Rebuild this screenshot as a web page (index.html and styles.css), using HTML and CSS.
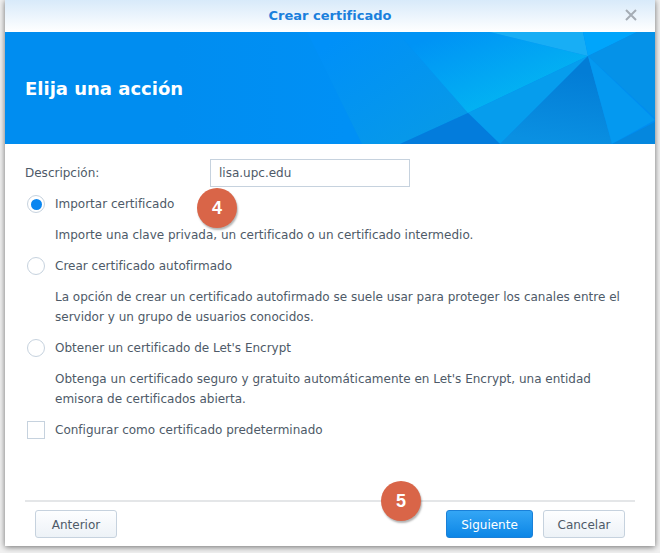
FILE: index.html
```html
<!DOCTYPE html>
<html lang="es">
<head>
<meta charset="utf-8">
<title>Crear certificado</title>
<link rel="stylesheet" href="styles.css">
</head>
<body>
<div class="window">
  <header class="titlebar">
    <span class="title">Crear certificado</span>
    <svg class="close" width="12" height="12" viewBox="0 0 12 12"><path d="M1 1L11 11M11 1L1 11" stroke="#a5acb5" stroke-width="2" fill="none"/></svg>
  </header>
  <section class="banner">
    <svg class="banner-art" width="650" height="112" viewBox="0 0 650 112">
      <defs>
        <linearGradient id="lit" gradientUnits="userSpaceOnUse" x1="440" y1="0" x2="470" y2="80">
          <stop offset="0" stop-color="#0093f5"/>
          <stop offset="1" stop-color="#03b2f2"/>
        </linearGradient>
        <linearGradient id="mid" gradientUnits="userSpaceOnUse" x1="340" y1="0" x2="420" y2="112">
          <stop offset="0" stop-color="#0090f8"/>
          <stop offset="1" stop-color="#0799e8"/>
        </linearGradient>
        <linearGradient id="deep" gradientUnits="userSpaceOnUse" x1="570" y1="40" x2="560" y2="112">
          <stop offset="0" stop-color="#037dd6"/>
          <stop offset="1" stop-color="#0a90e2"/>
        </linearGradient>
        <linearGradient id="left" gradientUnits="userSpaceOnUse" x1="170" y1="0" x2="340" y2="0">
          <stop offset="0" stop-color="#008df0"/>
          <stop offset="1" stop-color="#0090f5"/>
        </linearGradient>
      </defs>
      <rect width="650" height="112" fill="#008df0"/>
      <polygon points="170,0 302,0 357,112 170,112" fill="url(#left)"/>
      <polygon points="302,0 392,0 463,81 395,112 357,112" fill="url(#mid)"/>
      <polygon points="392,0 485,0 583,24 463,81" fill="url(#lit)"/>
      <polygon points="485,0 578,0 583,24" fill="#18aef5"/>
      <polygon points="578,0 632,0 583,24" fill="#00a5fb"/>
      <polygon points="583,24 632,0 650,0 650,86" fill="#0592e8"/>
      <polygon points="463,81 583,24 495,112" fill="#069ded"/>
      <polygon points="463,81 495,112 395,112" fill="#037cdc"/>
      <polygon points="583,24 607,112 495,112" fill="url(#deep)"/>
      <polygon points="583,24 650,88 607,112" fill="#0499f0"/>
      <polygon points="650,90 650,112 607,112" fill="#0587de"/>
    </svg>
    <h1 class="heading">Elija una acción</h1>
  </section>
  <main class="content">
    <div class="field">
      <label class="field-label">Descripción:</label>
      <div class="input">lisa.upc.edu</div>
    </div>
    <div class="option first">
      <span class="radio checked"></span><span>Importar certificado</span>
    </div>
    <p class="hint one">Importe una clave privada, un certificado o un certificado intermedio.</p>
    <div class="option">
      <span class="radio"></span><span>Crear certificado autofirmado</span>
    </div>
    <p class="hint">La opción de crear un certificado autofirmado se suele usar para proteger los canales entre el<br>servidor y un grupo de usuarios conocidos.</p>
    <div class="option">
      <span class="radio"></span><span>Obtener un certificado de Let's Encrypt</span>
    </div>
    <p class="hint">Obtenga un certificado seguro y gratuito automáticamente en Let's Encrypt, una entidad<br>emisora de certificados abierta.</p>
    <div class="option">
      <span class="checkbox"></span><span>Configurar como certificado predeterminado</span>
    </div>
  </main>
  <footer class="footer">
    <button class="btn">Anterior</button>
    <div class="actions">
      <button class="btn primary">Siguiente</button>
      <button class="btn">Cancelar</button>
    </div>
  </footer>
  <span class="badge badge-four">4</span>
  <span class="badge badge-five">5</span>
</div>
</body>
</html>
```
FILE: styles.css
```css
* { box-sizing: border-box; }
html, body { margin: 0; height: 100%; }
body {
  background: #f1f1f1;
  padding: 0 5px 7px 5px;
  font-family: "DejaVu Sans", sans-serif;
  font-size: 12px;
  color: #4e5a68;
  overflow: hidden;
}
.window {
  position: relative;
  height: 546px;
  background: #fff;
  display: flex;
  flex-direction: column;
  box-shadow: 0 1px 6px rgba(0,0,0,.55);
}
.titlebar {
  height: 32px;
  flex: none;
  display: flex;
  align-items: center;
  justify-content: center;
  position: relative;
  padding-bottom: 2px;
  background: linear-gradient(#d8eafa, #fff);
}
.title { color: #1a80dc; font-weight: bold; font-size: 13px; }
.close { position: absolute; right: 18px; top: 9px; }
.banner {
  height: 112px;
  flex: none;
  position: relative;
  background: #008df0;
  display: flex;
  align-items: center;
  padding: 0 0 0 20px;
  overflow: hidden;
}
.banner-art { position: absolute; left: 0; top: 0; }
.heading {
  position: relative;
  margin: 0;
  color: #fff;
  font-size: 18px;
  font-weight: bold;
}
.content { flex: 1; padding: 15px 20px 0; }
.field { display: flex; align-items: center; height: 28px; }
.field-label { width: 185px; }
.input {
  width: 200px;
  height: 28px;
  border: 1px solid #c6d2de;
  padding: 0 8px;
  line-height: 27px;
}
.option { display: flex; align-items: center; gap: 10px; height: 20px; margin-top: 11px; padding-left: 2px; }
.option.first { margin-top: 7px; }
.radio {
  width: 18px; height: 18px; border-radius: 50%;
  border: 1px solid #c6d2de; background: #fff; flex: none;
  display: flex; align-items: center; justify-content: center;
}
.radio.checked::after {
  content: ""; width: 11px; height: 11px; border-radius: 50%; background: #0a86f0;
}
.checkbox { width: 18px; height: 18px; border: 1px solid #c6d2de; flex: none; }
.hint { margin: 11px 0 0 30px; line-height: 20px; }
.footer {
  flex: none;
  margin: 0 20px;
  border-top: 2px solid #e4e6e8;
  height: 46px;
  padding: 8px 10px 0;
  display: flex;
  justify-content: space-between;
  align-items: flex-start;
}
.actions { display: flex; gap: 10px; }
.btn {
  width: 82px; height: 28px;
  border: 1px solid #c6d2de;
  border-radius: 3px;
  background: linear-gradient(#fdfeff, #edf2f7);
  color: #4e5a68;
  font: 12px "DejaVu Sans", sans-serif;
  padding: 1px 0 0;
}
.btn.primary {
  width: 87px;
  border-color: #1a80d8;
  background: linear-gradient(#34a6f5, #0c86e6);
  color: #fff;
}
.badge {
  position: absolute;
  width: 40px; height: 40px; border-radius: 50%;
  background: #d96548;
  color: #fff;
  font: bold 18px "Liberation Sans", sans-serif;
  display: flex; align-items: center; justify-content: center;
  box-shadow: 1px 2px 2px rgba(0,0,0,.3);
}
.badge-four { left: 192px; top: 188px; }
.badge-five { left: 376px; top: 481px; }
```
